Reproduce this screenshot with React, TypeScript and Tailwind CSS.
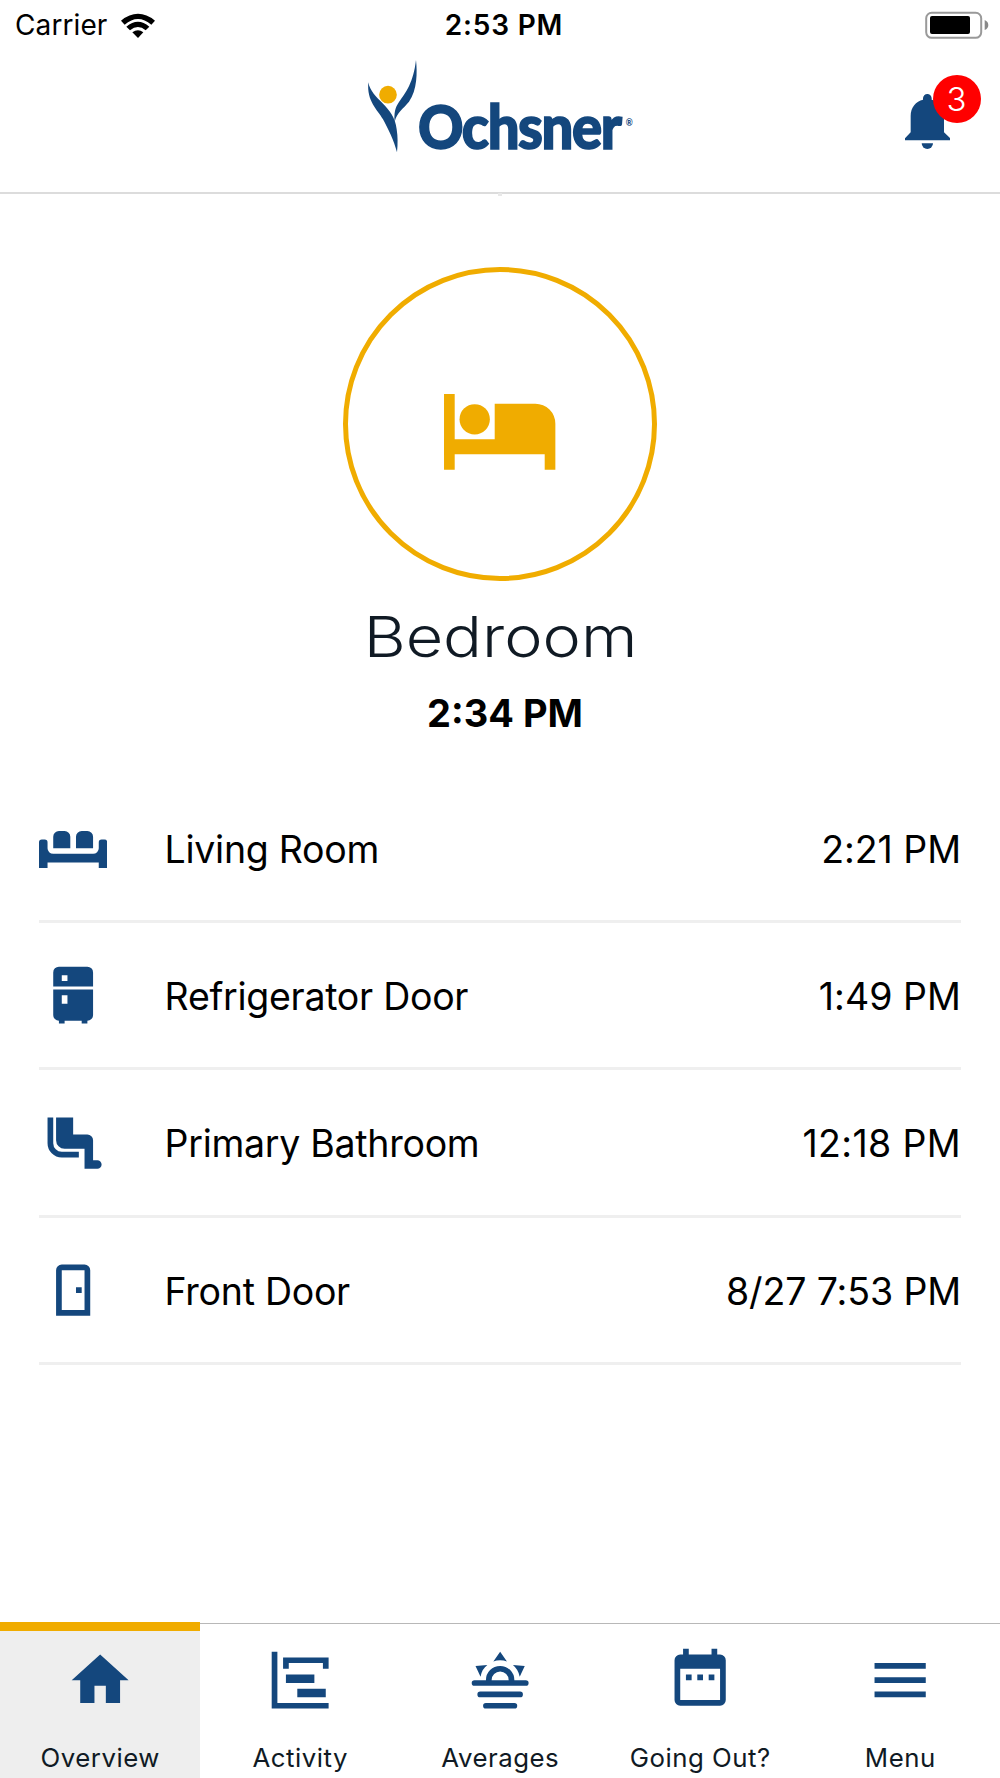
import React from "react";

const ICONS = {
  sofa: "M0 10a1 1 0 0 1 1-1h1a1 1 0 0 1 1 1v2a2 2 0 0 0 2 2h14a2 2 0 0 0 2-2v-2a1 1 0 0 1 1-1h1a1 1 0 0 1 1 1v9h-3v-2H3v2H0zM5 12V8a2 2 0 0 1 2-2h2a2 2 0 0 1 2 2v4zM13 12V8a2 2 0 0 1 2-2h2a2 2 0 0 1 2 2v4z",
  fridge:
    "M7 2h10a2 2 0 0 1 2 2v5H5V4a2 2 0 0 1 2-2zM8 5v2h2V5zM5 10h14v9a2 2 0 0 1-2 2v1h-2v-1H9v1H7v-1a2 2 0 0 1-2-2zM8 12v3h2v-3z",
  seat: "M3 3h2v9a3 3 0 0 0 3 3h6v2H8a5 5 0 0 1-5-5zM6 3h6v6h5a2 2 0 0 1 2 2v7h1.5a1.5 1.5 0 0 1 0 3H16v-7H9a3 3 0 0 1-3-3z",
  door: "M8 3h8a2 2 0 0 1 2 2v16H6V5a2 2 0 0 1 2-2zM8 5v14h8V5zM13 11h2v2h-2z",
  home: "M10 20V14H14V20H19V12H22L12 3L2 12H5V20z",
  gantt: "M2 2h2v18h18v2H2zM6 4h16v4h-2V6H8v2H6zM7 10h10v3H7zM11 15h10v3H11z",
  sunset:
    "M3 12h4a5 5 0 0 1 10 0h4a1 1 0 0 1 0 2H3a1 1 0 0 1 0-2zM9 12h6a3 3 0 0 0-6 0zM5 16h14a1 1 0 0 1 0 2H5a1 1 0 0 1 0-2zM7 20h10a1 1 0 0 1 0 2H7a1 1 0 0 1 0-2zM12 2l2.39 3.42C13.65 5.15 12.84 5 12 5s-1.65.15-2.39.42zM3.34 7l4.16-.35C6.84 7.2 6.3 7.8 5.86 8.5A7 7 0 0 0 5.11 10.79zM20.65 7l-1.77 3.79a7.02 7.02 0 0 0-2.38-4.15z",
  calendar:
    "M6 1h2v2h8V1h2v2h1a2 2 0 0 1 2 2v14a2 2 0 0 1-2 2H5a2 2 0 0 1-2-2V5a2 2 0 0 1 2-2h1zM5 8v11h14V8zM7 10h2v2H7zM11 10h2v2h-2zM15 10h2v2h-2z",
  menu: "M3 6h18v2H3zM3 11h18v2H3zM3 16h18v2H3z",
};

function Icon({ name }: { name: keyof typeof ICONS }) {
  return (
    <svg viewBox="0 0 24 24" className="h-[68.3px] w-[68.3px] shrink-0 text-[#14477d]">
      <path d={ICONS[name]} fill="currentColor" fillRule="evenodd" />
    </svg>
  );
}

function StatusBar() {
  return (
    <div className="grid h-[50px] grid-cols-3 items-center text-[28px] leading-[51px] text-black">
      <div className="flex items-center pl-[15px]">
        <span className="tracking-[0.1px]">Carrier</span>
        <svg viewBox="360 34 108 78" className="ml-[13px] h-[26px] w-[36px]">
          <path d="M363 57Q414 16 465 57L454 69Q414 35 374 69z" />
          <path d="M379 75Q414 46 448 75L437 86Q414 66 390 86z" />
          <path d="M397 92Q414 80 430 92L414 109z" />
        </svg>
      </div>
      <div className="pl-[8px] text-center font-semibold tracking-[0.8px]">2:53 PM</div>
      <svg viewBox="920 0 80 50" className="h-[50px] w-20 justify-self-end">
        <rect x="926.2" y="11.8" width="55" height="25" rx="5.5" fill="none" stroke="#999" strokeWidth="2" />
        <rect x="930" y="15" width="40" height="18" rx="2" />
        <path d="M984.7 19q3.6 1.5 3.6 5t-3.6 5z" fill="#888" />
      </svg>
    </div>
  );
}

function Logo() {
  return (
    <svg viewBox="0 0 300 142" className="h-[142px] w-[300px] overflow-visible">
      <g transform="scale(.33333)" fill="#14477d">
        <path d="M55 97C64 150 134 167 140 238Q145 270 141 307C132 272 115 238 99 208C82 178 50 155 55 97z" />
        <path d="M198 30C202 68 202 119 177 155C159 177 141 187 134 215C132 190 135 173 147 156C168 127 190 98 198 30z" />
        <circle cx="114" cy="134" r="26.5" fill="#f0ac00" />
      </g>
      <text
        x="68"
        y="98.5"
        textLength="202.5"
        lengthAdjust="spacingAndGlyphs"
        stroke="#14477d"
        strokeWidth="1.6"
        className="fill-[#14477d] font-[Lato] text-[60px] font-black tracking-[-1.5px]"
      >
        Ochsner
      </text>
      <text x="275.8" y="76" className="fill-[#14477d] font-[Lato] text-[8.5px] font-bold">
        ®
      </text>
    </svg>
  );
}

function Header() {
  return (
    <header className="relative flex h-[144px] items-start justify-center border-b-2 border-[#dcdcdc]">
      <Logo />
      <button className="absolute right-[18px] top-[24px] h-[76px] w-[78px]">
        <svg viewBox="72 222 234 228" className="h-[76px] w-[78px]" fill="#14477d">
          <path d="M75 415L92 397V348C92 322 108 303 129 299V295a13 13 0 0 1 26 0V299C176 303 192 322 192 348V397L210 414V421H75z" />
          <path d="M125 430H159a17 17 0 0 1-34 0z" />
        </svg>
        <span className="absolute right-[1.5px] top-[1px] flex h-12 w-12 items-center justify-center rounded-full bg-[#ff0000] text-[33px] font-[350] leading-none text-white">
          3
        </span>
      </button>
      <span className="absolute left-[498px] top-[143px] h-[3px] w-1 bg-[#e8e8e8]" />
    </header>
  );
}

const ROWS: { icon: keyof typeof ICONS; label: string; time: string; timeClass: string }[] = [
  { icon: "sofa", label: "Living Room", time: "2:21 PM", timeClass: "tracking-[-0.05px]" },
  { icon: "fridge", label: "Refrigerator Door", time: "1:49 PM", timeClass: "tracking-[0.05px]" },
  { icon: "seat", label: "Primary Bathroom", time: "12:18 PM", timeClass: "tracking-[0.35px]" },
  { icon: "door", label: "Front Door", time: "8/27 7:53 PM", timeClass: "tracking-[-0.12px]" },
];

const TABS: { icon: keyof typeof ICONS; label: string }[] = [
  { icon: "home", label: "Overview" },
  { icon: "gantt", label: "Activity" },
  { icon: "sunset", label: "Averages" },
  { icon: "calendar", label: "Going Out?" },
  { icon: "menu", label: "Menu" },
];

export default function App() {
  return (
    <div className="flex h-[1778px] w-[1000px] flex-col overflow-hidden bg-white font-[Inter,sans-serif]">
      <StatusBar />
      <Header />
      <main className="flex flex-1 flex-col">
        <section className="flex h-[581.6px] flex-col items-center pt-[72.7px]">
          <div className="flex h-[314px] w-[314px] items-center justify-center rounded-full border-[5px] border-[#f0ac00]">
            <svg viewBox="343 416 334 228" className="mt-[17px] h-[76px] w-[111.4px]" fill="#f0ac00">
              <path d="M343 416h32V552h120V445H617a60 60 0 0 1 60 60V643H645V597H375V643H343z" />
              <circle cx="435" cy="492" r="45.5" />
            </svg>
          </div>
          <h1 className="mt-[21px] origin-center scale-x-[1.155] text-[56px] font-light leading-[70px] text-[#101a24]">
            Bedroom
          </h1>
          <p className="mt-[16px] pl-[10px] text-[38px] font-bold leading-[50px] text-black">2:34 PM</p>
        </section>
        <ul className="px-[39px] text-[37.5px] text-black">
          {ROWS.map((row) => (
            <li key={row.label} className="flex h-[147.4px] items-center border-b-[3px] border-[#efefef]">
              <div className="-ml-[0.5px] flex pt-[0.6px]">
                <Icon name={row.icon} />
              </div>
              <span className="ml-[57.8px] pt-[4px] tracking-[-0.28px]">{row.label}</span>
              <span className="ml-auto pt-[4px]">
                <span className={row.timeClass}>{row.time}</span>
              </span>
            </li>
          ))}
        </ul>
      </main>
      <nav className="grid h-[156px] grid-cols-5 text-[25.8px] text-[#101a24]">
        {TABS.map((tab, i) => (
          <div
            key={tab.label}
            className={
              i === 0
                ? "flex flex-col items-center border-t-[9px] border-[#f0ac00] bg-[#eeeeee] pt-[15px]"
                : "mt-[1px] flex flex-col items-center border-t border-[#b8b8b8] pt-[22px]"
            }
          >
            <div className="-ml-[0.4px] flex">
              <Icon name={tab.icon} />
            </div>
            <span className="mt-[28px] whitespace-nowrap pl-[0.5px] leading-[32px] tracking-[0.5px]">{tab.label}</span>
          </div>
        ))}
      </nav>
    </div>
  );
}
